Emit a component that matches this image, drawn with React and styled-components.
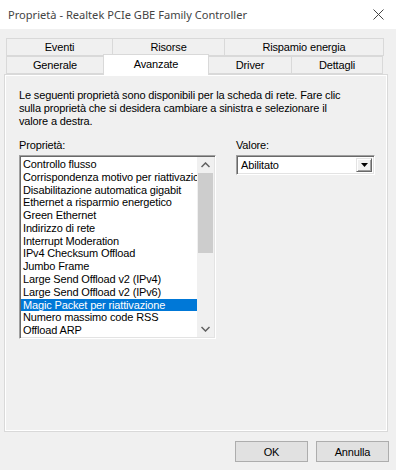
import React from 'react';
import styled, { createGlobalStyle } from 'styled-components';

const GlobalStyle = createGlobalStyle`
  html, body {
    margin: 0;
    padding: 0;
    background: #f0f0f0;
  }
  * {
    box-sizing: border-box;
  }
`;

const tabsTop = [
  { label: 'Eventi', width: 107 },
  { label: 'Risorse', width: 113 },
  { label: 'Rispamio energia', width: 160 },
];

const tabsBottom = [
  { label: 'Generale', width: 98 },
  { label: 'Avanzate', width: 106, active: true },
  { label: 'Driver', width: 84 },
  { label: 'Dettagli', width: 92 },
];

const properties = [
  'Controllo flusso',
  'Corrispondenza motivo per riattivazione',
  'Disabilitazione automatica gigabit',
  'Ethernet a risparmio energetico',
  'Green Ethernet',
  'Indirizzo di rete',
  'Interrupt Moderation',
  'IPv4 Checksum Offload',
  'Jumbo Frame',
  'Large Send Offload v2 (IPv4)',
  'Large Send Offload v2 (IPv6)',
  'Magic Packet per riattivazione',
  'Numero massimo code RSS',
  'Offload ARP',
];

function App() {
  return (
    <>
      <GlobalStyle />
      <Window>
        <TitleBar>
          <Title>Proprietà - Realtek PCIe GBE Family Controller</Title>
          <CloseButton>
            <svg width="11" height="11" viewBox="0 0 11 11">
              <path d="M0.5 0.5 L10.5 10.5 M10.5 0.5 L0.5 10.5" stroke="#444" strokeWidth="1" fill="none" />
            </svg>
          </CloseButton>
        </TitleBar>

        <Content>
          <TabStrip>
            <TabRow>
              {tabsTop.map((t) => (
                <Tab key={t.label} $width={t.width}>{t.label}</Tab>
              ))}
            </TabRow>
            <TabRow>
              {tabsBottom.map((t) => (
                <Tab key={t.label} $width={t.width} $active={t.active}>{t.label}</Tab>
              ))}
            </TabRow>
          </TabStrip>

          <Panel>
            <Description>
              Le seguenti proprietà sono disponibili per la scheda di rete. Fare clic<br />
              sulla proprietà che si desidera cambiare a sinistra e selezionare il<br />
              valore a destra.
            </Description>

            <Columns>
              <Column $width={197}>
                <Label>Proprietà:</Label>
                <ListBox>
                  <Items>
                    {properties.map((p) => (
                      <Item key={p} $selected={p === 'Magic Packet per riattivazione'}>{p}</Item>
                    ))}
                  </Items>
                  <ScrollBar>
                    <ArrowButton>
                      <svg width="9" height="6" viewBox="0 0 9 6">
                        <polyline points="0.5,5 4.5,1 8.5,5" stroke="#606060" strokeWidth="1.5" fill="none" />
                      </svg>
                    </ArrowButton>
                    <Thumb />
                    <Track />
                    <ArrowButton>
                      <svg width="9" height="6" viewBox="0 0 9 6">
                        <polyline points="0.5,1 4.5,5 8.5,1" stroke="#606060" strokeWidth="1.5" fill="none" />
                      </svg>
                    </ArrowButton>
                  </ScrollBar>
                </ListBox>
              </Column>

              <Column $width={139}>
                <Label>Valore:</Label>
                <ComboBox>
                  <ComboValue>Abilitato</ComboValue>
                  <DropButton>
                    <svg width="7" height="4" viewBox="0 0 7 4">
                      <polygon points="0,0 7,0 3.5,4" fill="#000" />
                    </svg>
                  </DropButton>
                </ComboBox>
              </Column>
            </Columns>
          </Panel>

          <Footer>
            <Button>OK</Button>
            <Button>Annulla</Button>
          </Footer>
        </Content>
      </Window>
    </>
  );
}

const Window = styled.div`
  width: 396px;
  height: 470px;
  display: flex;
  flex-direction: column;
  background: #f0f0f0;
  font-family: "Liberation Sans", Arial, sans-serif;
  font-size: 11px;
  letter-spacing: -0.15px;
  color: #000;
  overflow: hidden;
`;

const TitleBar = styled.div`
  height: 29px;
  background: #fff;
  display: flex;
  align-items: center;
  padding: 0 0 0 8px;
`;

const Title = styled.div`
  flex: 1;
  font-family: "Noto Sans", "Open Sans", sans-serif;
  font-size: 11.1px;
  letter-spacing: 0;
  color: #444;
  white-space: nowrap;
`;

const CloseButton = styled.div`
  width: 30px;
  height: 29px;
  display: flex;
  align-items: center;
  justify-content: center;
  margin-right: 3px;
`;

const Content = styled.div`
  flex: 1;
  display: flex;
  flex-direction: column;
  padding: 9px 8px 8px 4px;
`;

const TabStrip = styled.div`
  display: flex;
  flex-direction: column;
  padding: 0 2px;
`;

const TabRow = styled.div`
  display: flex;
  height: 18px;
`;

const Tab = styled.div`
  width: ${(p) => p.$width}px;
  display: flex;
  align-items: center;
  justify-content: center;
  border: 1px solid #d9d9d9;
  margin-left: -1px;
  background: ${(p) => (p.$active ? '#fff' : '#f0f0f0')};
  white-space: nowrap;

  &:first-child {
    margin-left: 0;
  }

  ${(p) =>
    p.$active &&
    `
    position: relative;
    z-index: 1;
    margin-top: -2px;
    height: 21px;
    border-bottom: none;
    padding-bottom: 3px;
  `}
`;

const Panel = styled.div`
  height: 358px;
  border: 1px solid #d9d9d9;
  box-shadow: inset 1px 1px 0 #fff, inset -1px -1px 0 #fff;
  padding: 14px 12px 0 14px;
  display: flex;
  flex-direction: column;
`;

const Description = styled.div`
  line-height: 13px;
  white-space: nowrap;
`;

const Columns = styled.div`
  display: flex;
  gap: 20px;
  margin-top: 11px;
`;

const Column = styled.div`
  width: ${(p) => p.$width}px;
  display: flex;
  flex-direction: column;
`;

const Label = styled.div`
  line-height: 13px;
  margin-bottom: 3px;
`;

const ListBox = styled.div`
  height: 184px;
  display: flex;
  background: #fff;
  border: 1px solid;
  border-color: #a0a0a0 #fff #fff #a0a0a0;
  box-shadow: inset 1px 1px 0 #696969, inset -1px -1px 0 #e3e3e3;
  padding: 1px;
`;

const Items = styled.div`
  flex: 1;
  display: flex;
  flex-direction: column;
  overflow: hidden;
  padding-top: 1px;
`;

const Item = styled.div`
  height: 13px;
  line-height: 13px;
  padding-left: 2px;
  white-space: nowrap;
  overflow: hidden;
  background: ${(p) => (p.$selected ? '#0078d7' : 'transparent')};
  color: ${(p) => (p.$selected ? '#fff' : '#000')};
`;

const ScrollBar = styled.div`
  width: 17px;
  display: flex;
  flex-direction: column;
  background: #f0f0f0;
`;

const ArrowButton = styled.div`
  height: 16px;
  display: flex;
  align-items: center;
  justify-content: center;
`;

const Thumb = styled.div`
  height: 80px;
  margin: 0 1px;
  background: #cdcdcd;
`;

const Track = styled.div`
  flex: 1;
`;

const ComboBox = styled.div`
  height: 20px;
  display: flex;
  align-items: stretch;
  background: #fff;
  border: 1px solid;
  border-color: #a0a0a0 #fff #fff #a0a0a0;
  box-shadow: inset 1px 1px 0 #696969, inset -1px -1px 0 #e3e3e3;
  padding: 2px;
`;

const ComboValue = styled.div`
  flex: 1;
  display: flex;
  align-items: center;
  padding-left: 2px;
`;

const DropButton = styled.div`
  width: 16px;
  display: flex;
  align-items: center;
  justify-content: center;
  background: #f0f0f0;
  border: 1px solid;
  border-color: #e3e3e3 #696969 #696969 #e3e3e3;
  box-shadow: inset 1px 1px 0 #fff, inset -1px -1px 0 #a0a0a0;
`;

const Footer = styled.div`
  display: flex;
  justify-content: flex-end;
  gap: 8px;
  margin-top: 9px;
  margin-right: -1px;
`;

const Button = styled.div`
  width: 73px;
  height: 21px;
  display: flex;
  align-items: center;
  justify-content: center;
  background: #e1e1e1;
  border: 1px solid #adadad;
`;

export default App;
